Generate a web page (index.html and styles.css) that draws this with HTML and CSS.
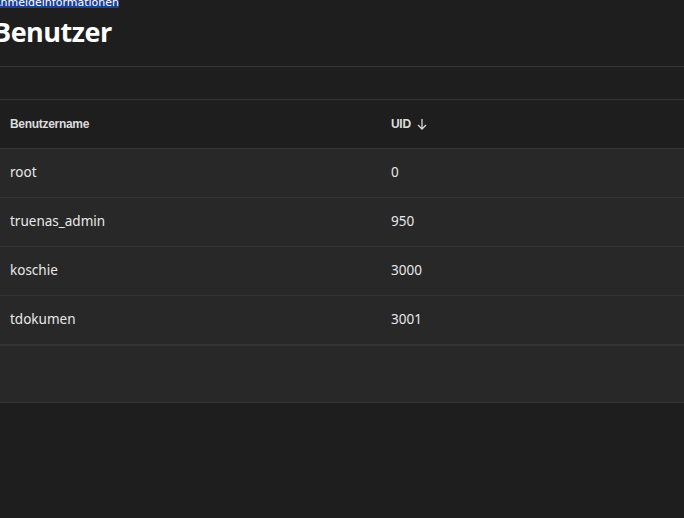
FILE: index.html
```html
<!DOCTYPE html>
<html lang="de">
  <head>
    <meta charset="UTF-8" />
    <meta name="viewport" content="width=device-width, initial-scale=1" />
    <title>Benutzer</title>
    <link rel="stylesheet" href="styles.css">
  </head>
  <body>
    <div class="page-header">
      <a class="crumb" href="#">Anmeldeinformationen</a>
      <h1>Benutzer</h1>
    </div>

    <div class="toolbar"></div>

    <div class="users-table">
      <div class="row head">
        <div class="cell">Benutzername</div>
        <div class="cell">
          UID
          <svg class="sort" width="10" height="12" viewBox="0 0 10 12">
            <path d="M5 1v10M1 7l4 4 4-4" fill="none" stroke="#d8d8d8" stroke-width="1.3" />
          </svg>
        </div>
      </div>
      <div class="row">
        <div class="cell">root</div>
        <div class="cell">0</div>
      </div>
      <div class="row">
        <div class="cell">truenas_admin</div>
        <div class="cell">950</div>
      </div>
      <div class="row">
        <div class="cell">koschie</div>
        <div class="cell">3000</div>
      </div>
      <div class="row">
        <div class="cell">tdokumen</div>
        <div class="cell">3001</div>
      </div>
      <div class="table-footer"></div>
    </div>
  </body>
</html>
```

FILE: styles.css
```css
/* Global */
body {
  margin: 0;
  background-color: #1e1e1e;
  color: #e6e6e6;
  font-family: "Open Sans", "Noto Sans", sans-serif;
  overflow: hidden;
}

/* Header */
.page-header {
  display: flow-root;
  height: 66px;
  border-bottom: 1px solid #353535;
  margin-left: -7px;
}

.crumb {
  display: block;
  width: max-content;
  margin-top: -3px;
  font-family: "DejaVu Sans", Verdana, sans-serif;
  font-size: 11px;
  line-height: 11px;
  color: #ffffff;
  background-color: #1c3f98;
  text-decoration: none;
}

h1 {
  margin: 8px 0 0 0;
  font-size: 27px;
  line-height: 32px;
  font-weight: 700;
  color: #ffffff;
  letter-spacing: -0.5px;
}

.toolbar {
  height: 32px;
  border-bottom: 1px solid #353535;
}

/* Table */
.users-table {
  font-family: "Noto Sans", sans-serif;
}

.row {
  display: grid;
  grid-template-columns: 381px 1fr;
  height: 48px;
  align-items: center;
  background-color: #282828;
  border-bottom: 1px solid #353535;
  font-size: 13.5px;
  color: #e8e8e8;
}

.row.head {
  background-color: #1e1e1e;
  font-family: "Liberation Sans", Arial, sans-serif;
  font-size: 12px;
  font-weight: 700;
  color: #dcdcdc;
  letter-spacing: -0.3px;
}

.cell {
  padding-left: 10px;
  padding-bottom: 3px;
  display: flex;
  align-items: center;
}

.row.head .cell {
  padding-bottom: 1px;
}

.sort {
  margin-left: 6px;
}

.table-footer {
  height: 56px;
  background-color: #282828;
  border-top: 1px solid #333333;
  border-bottom: 1px solid #353535;
}
```
